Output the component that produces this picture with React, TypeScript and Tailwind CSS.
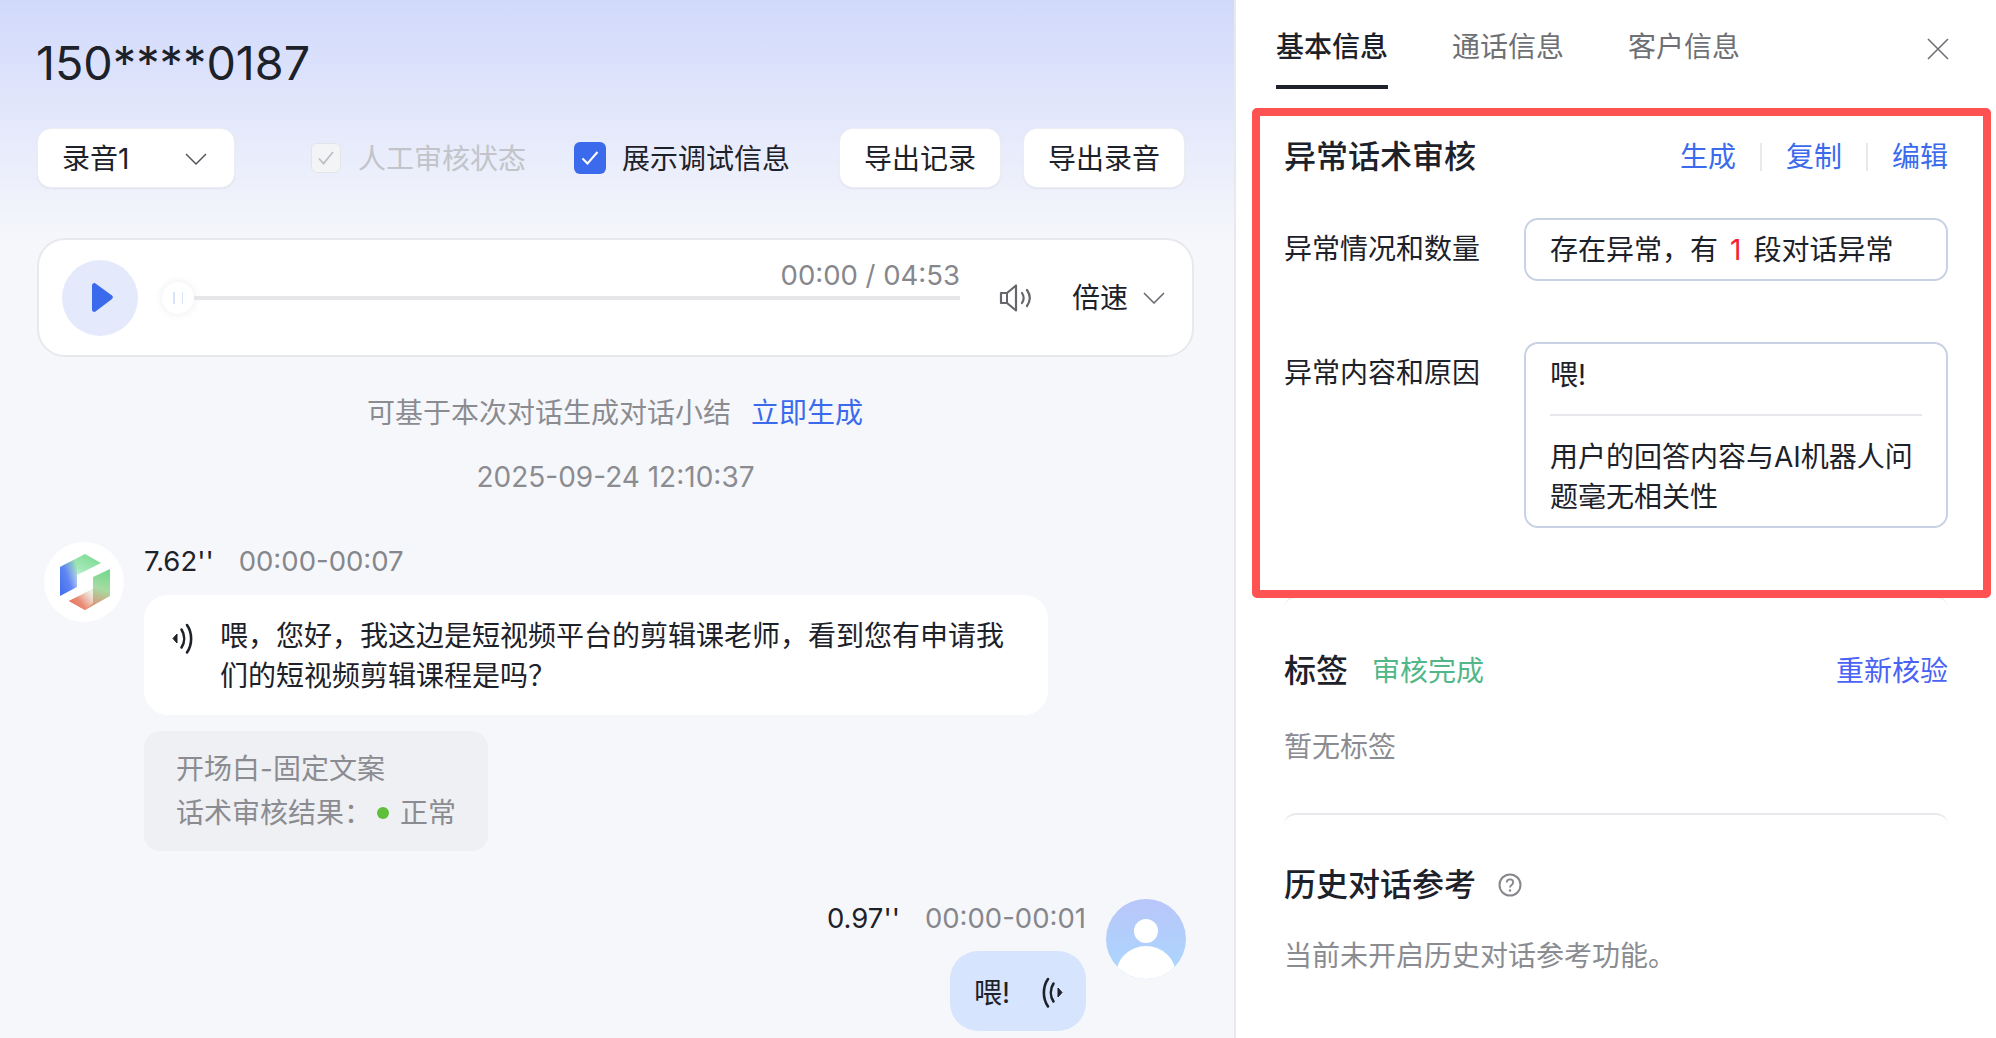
const FONT = "font-['Inter','Noto_Sans_CJK_SC',sans-serif]";

function Chevron({ color = '#65676c' }: { color?: string }) {
  return (
    <svg width="22" height="12" viewBox="0 0 22 12" fill="none" className="shrink-0">
      <path d="M1 1l10 10L21 1" stroke={color} strokeWidth="1.500" />
    </svg>
  );
}

function WaveIcon({ flip = false }: { flip?: boolean }) {
  return (
    <svg width="24" height="32" viewBox="0 0 24 32" fill="none" className={flip ? '-scale-x-100' : ''}>
      <path d="M1 15.500l4-4.500v9z" fill="#1d2129" stroke="#1d2129" strokeWidth="1" strokeLinejoin="round" />
      <path d="M9.500 6.500c3.500 5.500 3.500 12.500 0 18" stroke="#1d2129" strokeWidth="2.600" strokeLinecap="round" />
      <path d="M15 2c5.500 8 5.500 19.500 0 27.500" stroke="#1d2129" strokeWidth="2.600" strokeLinecap="round" />
    </svg>
  );
}

function SpeakerIcon() {
  return (
    <svg width="34" height="32" viewBox="0 0 34 32" fill="none">
      <path d="M2 11h6l9-7.500v25L8 21H2z" stroke="#65676c" strokeWidth="2.200" strokeLinejoin="round" />
      <path d="M8 11v10" stroke="#65676c" strokeWidth="2" />
      <path d="M23 11c2 3 2 7 0 10" stroke="#65676c" strokeWidth="2.200" strokeLinecap="round" />
      <path d="M28 8c3.500 5 3.500 11 0 16" stroke="#65676c" strokeWidth="2.200" strokeLinecap="round" />
    </svg>
  );
}

function BotLogo() {
  return (
    <div className="flex h-[80px] w-[80px] shrink-0 items-center justify-center rounded-full bg-white">
      <svg width="80" height="80" viewBox="0 0 80 80">
        <defs>
          <linearGradient id="topGreen" x1="0.7" y1="0" x2="0.35" y2="0.75">
            <stop offset="0" stopColor="#7fdc96" />
            <stop offset="0.5" stopColor="#a6e8b8" />
            <stop offset="1" stopColor="#ffffff" />
          </linearGradient>
          <linearGradient id="leftBlue" x1="0" y1="1" x2="1" y2="0.2">
            <stop offset="0" stopColor="#3f6cf0" />
            <stop offset="0.5" stopColor="#5f86f2" />
            <stop offset="1" stopColor="#3f6cf0" stopOpacity="0" />
          </linearGradient>
          <linearGradient id="rightGreen" x1="0.8" y1="0" x2="0.5" y2="1">
            <stop offset="0" stopColor="#74d88d" />
            <stop offset="0.45" stopColor="#a7dba3" />
            <stop offset="1" stopColor="#e8836a" />
          </linearGradient>
          <linearGradient id="bottomRed" x1="0" y1="1" x2="1" y2="0.3">
            <stop offset="0" stopColor="#e2694f" />
            <stop offset="0.5" stopColor="#e98c76" />
            <stop offset="1" stopColor="#ffffff" stopOpacity="0.7" />
          </linearGradient>
        </defs>
        <polygon points="16,25 41,12 57,21 33,33 33,45 16,54" fill="url(#topGreen)" />
        <polygon points="16,25 33,16 33,45 16,54" fill="url(#leftBlue)" />
        <polygon points="66,27 66,54 41,68 25,59 49,47 49,35" fill="url(#rightGreen)" />
        <polygon points="49,47 49,61 41,68 25,59" fill="url(#bottomRed)" />
      </svg>
    </div>
  );
}

function UserAvatar() {
  return (
    <div className="flex h-[80px] w-[80px] shrink-0 items-end justify-center overflow-hidden rounded-full bg-gradient-to-b from-[#b9c6f9] to-[#a9d8ff]">
      <svg width="80" height="80" viewBox="0 0 80 80">
        <circle cx="40" cy="32" r="12" fill="#fff" />
        <ellipse cx="40" cy="76" rx="30" ry="29" fill="#fff" />
      </svg>
    </div>
  );
}

function Left() {
  return (
    <div className="h-full w-[1234px] shrink-0 bg-[#f6f7fb] bg-gradient-to-b from-[#d1d9fb] to-[#f6f7fb] bg-[length:100%_240px] bg-no-repeat">
      <h1 className="pl-[36px] pt-[33px] text-[46.700px] leading-[60px] text-[#1d2129]">150****0187</h1>

      <div className="mt-[35px] flex items-center pl-[37px] text-[28px] text-[#1d2129]">
        <div className="flex h-[60px] w-[198px] items-center justify-between rounded-[14px] border border-[#eceef4] bg-white pl-[24px] pr-[27px] pt-[2px] shadow-[0_1px_2px_rgba(0,0,0,0.06)]">
          <span>录音1</span>
          <Chevron color="#55575c" />
        </div>
        <div className="ml-[76px] flex h-[30px] w-[30px] items-center justify-center rounded-[6px] border border-[#e3e4e8] bg-[#f3f4f6]">
          <svg width="20" height="20" viewBox="0 0 20 20" fill="none">
            <path d="M3 10.500l4.500 5L17 4" stroke="#bdbfc4" strokeWidth="1.800" />
          </svg>
        </div>
        <span className="ml-[17px] pt-[2px] text-[#c2c4c9]">人工审核状态</span>
        <div className="ml-[48px] flex h-[32px] w-[32px] items-center justify-center rounded-[6px] bg-[#3b6bec]">
          <svg width="22" height="22" viewBox="0 0 22 22" fill="none">
            <path d="M3.500 11.500l5 5L18.500 5" stroke="#fff" strokeWidth="2" />
          </svg>
        </div>
        <span className="ml-[16px] pt-[2px]">展示调试信息</span>
        <div className="ml-[49px] flex h-[60px] w-[162px] items-center justify-center rounded-[14px] border border-[#eceef4] bg-white pt-[2px] shadow-[0_1px_2px_rgba(0,0,0,0.06)]">导出记录</div>
        <div className="ml-[22px] flex h-[60px] w-[162px] items-center justify-center rounded-[14px] border border-[#eceef4] bg-white pt-[2px] shadow-[0_1px_2px_rgba(0,0,0,0.06)]">导出录音</div>
      </div>

      <div className="ml-[37px] mt-[50px] flex h-[119px] w-[1157px] items-center rounded-[28px] border-2 border-[#e8e9ed] bg-white pl-[23px]">
        <div className="flex h-[76px] w-[76px] shrink-0 items-center justify-center rounded-full bg-[#e4e9fc]">
          <svg width="28" height="32" viewBox="0 0 28 32">
            <path d="M6 3.500c0-2 2-3 3.500-2L26 13.500c1.200.9 1.200 2.500 0 3.400L9.500 29.500C8 30.500 6 29.500 6 27.500z" fill="#3b6bec" />
          </svg>
        </div>
        <div className="ml-[24px] flex w-[798px] flex-col">
          <div className="h-[23px] text-right text-[27.500px] leading-[32px] text-[#86878c]">00:00 / 04:53</div>
          <div className="flex h-[32px] items-center">
            <div className="flex h-[32px] w-[32px] shrink-0 items-center justify-center gap-[7px] rounded-full bg-white shadow-[0_0_10px_rgba(0,0,0,0.08)]">
              <div className="h-[12px] w-[1.500px] bg-[#d6e3fb]" />
              <div className="h-[12px] w-[1.500px] bg-[#d6e3fb]" />
            </div>
            <div className="h-[4px] flex-1 bg-[#e6e6e8]" />
          </div>
          <div className="h-[23px]" />
        </div>
        <div className="ml-[39px]"><SpeakerIcon /></div>
        <span className="ml-[39px] text-[28px] text-[#1d2129]">倍速</span>
        <div className="ml-[15px]"><Chevron /></div>
      </div>

      <div className="mt-[36px] flex h-[40px] items-center justify-center gap-[20px] pr-[4px] text-[28px]">
        <span className="text-[#8b8c91]">可基于本次对话生成对话小结</span>
        <span className="text-[#3b6bec]">立即生成</span>
      </div>
      <div className="mt-[24px] h-[40px] pr-[3px] text-center text-[28px] leading-[40px] text-[#8b8c91]">2025-09-24 12:10:37</div>

      <div className="ml-[44px] mt-[45px] flex gap-[20px]">
        <BotLogo />
        <div className="flex flex-col items-start">
          <div className="flex h-[36px] items-center gap-[25px] pt-[2px] text-[27.500px] leading-[36px]">
            <span className="text-[#1d2129]">7.62''</span>
            <span className="text-[#86878c]">00:00-00:07</span>
          </div>
          <div className="mt-[17px] flex w-[904px] rounded-[24px] bg-white pb-[19px] pl-[28px] pr-[30px] pt-[21px] text-[28px] leading-[40px] text-[#1d2129]">
            <div className="mt-[7px] w-[48px] shrink-0"><WaveIcon /></div>
            <p>喂，您好，我这边是短视频平台的剪辑课老师，看到您有申请我们的短视频剪辑课程是吗？</p>
          </div>
          <div className="mt-[16px] rounded-[16px] bg-[#eff0f4] px-[32px] py-[16px] text-[28px] leading-[44px] text-[#8b8c91]">
            <div>开场白-固定文案</div>
            <div className="flex items-center">
              话术审核结果：
              <span className="ml-[5px] h-[12px] w-[12px] rounded-full bg-[#5fbf3c]" />
              <span className="ml-[11px]">正常</span>
            </div>
          </div>
        </div>
      </div>

      <div className="mt-[48px] flex justify-end gap-[20px] pr-[48px]">
        <div className="flex flex-col items-end">
          <div className="flex h-[36px] items-center gap-[25px] pt-[2px] text-[27.500px] leading-[36px]">
            <span className="text-[#1d2129]">0.97''</span>
            <span className="text-[#86878c]">00:00-00:01</span>
          </div>
          <div className="mt-[16px] flex h-[80px] w-[136px] items-center rounded-[28px] bg-[#d6e4fd] pl-[24px] pt-[4px] text-[28px] text-[#1d2129]">
            <span>喂!</span>
            <div className="ml-[29px]"><WaveIcon flip /></div>
          </div>
        </div>
        <UserAvatar />
      </div>
    </div>
  );
}

function Right() {
  return (
    <div className="h-full flex-1 border-l-2 border-[#e8e9ed] bg-white">
      <div className="flex h-[89px] items-start pl-[40px] pr-[47px] pt-[27px] text-[28px] leading-[40px] text-[#6e7075]">
        <div className="h-[62px] border-b-4 border-[#1d2129] font-medium text-[#1d2129]">基本信息</div>
        <div className="ml-[64px]">通话信息</div>
        <div className="ml-[64px]">客户信息</div>
        <svg className="ml-auto mt-[11px]" width="22" height="22" viewBox="0 0 22 22" fill="none">
          <path d="M1 1l20 20M21 1L1 21" stroke="#6e7075" strokeWidth="1.600" />
        </svg>
      </div>

      <div className="relative ml-[16px] mt-[19px] h-[490px] w-[739px] rounded-[5px] border-8 border-[#ff5252] bg-white pl-[24px] pr-[35px] pt-[21px] text-[28px] leading-[40px] text-[#1d2129]">
        <div className="flex h-[40px] items-center">
          <span className="text-[32px] font-medium">异常话术审核</span>
          <div className="ml-auto flex items-center text-[#3b6bec]">
            <span>生成</span>
            <div className="mx-[24px] h-[28px] w-[2px] bg-[#e8e9ed]" />
            <span>复制</span>
            <div className="mx-[24px] h-[28px] w-[2px] bg-[#e8e9ed]" />
            <span>编辑</span>
          </div>
        </div>
        <div className="mt-[41px] flex">
          <div className="w-[240px] shrink-0 pt-[11px]">异常情况和数量</div>
          <div className="flex h-[63px] flex-1 items-center rounded-[14px] border-2 border-[#c8d2e4] pl-[24px]">
            存在异常，有<span className="mx-[12px] text-[#f5222d]">1</span>段对话异常
          </div>
        </div>
        <div className="mt-[61px] flex">
          <div className="w-[240px] shrink-0 pt-[11px]">异常内容和原因</div>
          <div className="h-[186px] flex-1 rounded-[14px] border-2 border-[#c8d2e4] px-[24px] pt-[11px]">
            <div>喂!</div>
            <div className="mt-[19px] h-[2px] bg-[#e6e8ec]" />
            <p className="mt-[21px]">用户的回答内容与AI机器人问题毫无相关性</p>
          </div>
        </div>
      </div>

      <div className="ml-[48px] mr-[48px] -mt-[2px] rounded-t-[12px] border-t-2 border-[#eceef1] pt-[53px] text-[28px] leading-[40px]">
        <div className="flex h-[40px] items-center">
          <span className="text-[32px] font-medium text-[#1d2129]">标签</span>
          <span className="ml-[24px] text-[#52b788]">审核完成</span>
          <span className="ml-auto text-[#4a62f5]">重新核验</span>
        </div>
        <div className="mt-[36px] text-[#8b8c91]">暂无标签</div>
        <div className="mt-[46px] h-[12px] rounded-t-[12px] border-t-2 border-[#e8e9ed]" />
        <div className="mt-[40px] flex h-[40px] items-center">
          <span className="text-[32px] font-medium text-[#1d2129]">历史对话参考</span>
          <svg className="ml-[22px]" width="24" height="24" viewBox="0 0 24 24" fill="none">
            <circle cx="12" cy="12" r="10.500" stroke="#86878c" strokeWidth="2" />
            <path d="M8.800 9.500c0-4.200 6.400-4.200 6.400 0 0 2.600-3.200 2.400-3.200 5" stroke="#86878c" strokeWidth="1.800" />
            <circle cx="12" cy="17.500" r="1.200" fill="#86878c" />
          </svg>
        </div>
        <div className="mt-[31px] text-[#8b8c91]">当前未开启历史对话参考功能。</div>
      </div>
    </div>
  );
}

export default function App() {
  return (
    <div className={`${FONT} flex h-[1038px] w-[1996px] overflow-hidden`}>
      <Left />
      <Right />
    </div>
  );
}
